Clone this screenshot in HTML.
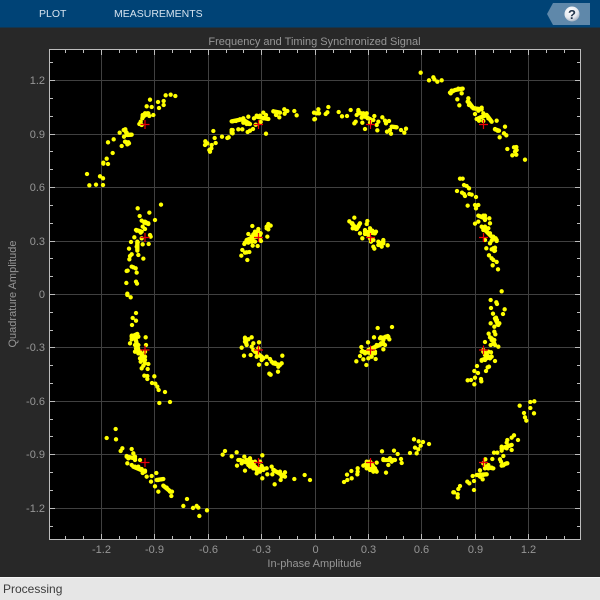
<!DOCTYPE html>
<html><head><meta charset="utf-8"><style>
html,body{margin:0;padding:0;width:600px;height:600px;overflow:hidden;background:#282828;font-family:"Liberation Sans",sans-serif}
svg{position:absolute;left:0;top:0}
</style></head><body>
<svg width="600" height="600" viewBox="0 0 600 600" font-family="'Liberation Sans',sans-serif">
<defs><radialGradient id="b" cx=".4" cy=".3" r=".8"><stop offset="0" stop-color="#fff"/><stop offset=".6" stop-color="#e4e8ee"/><stop offset="1" stop-color="#8d9db0"/></radialGradient></defs>
<rect width="600" height="600" fill="#282828"/>
<rect width="600" height="27.5" fill="#004376"/>
<text x="39" y="17" font-size="10.5" fill="#d4e2ee">PLOT</text>
<text x="114" y="17" font-size="10.5" fill="#d4e2ee">MEASUREMENTS</text>
<path d="M553 3H590V25H553L547 14Z" fill="#5f88aa"/>
<circle cx="572" cy="14" r="7.5" fill="url(#b)"/>
<text x="572" y="19" font-size="13" font-weight="bold" text-anchor="middle" fill="#24374d">?</text>
<text x="314.500" y="45" font-size="11" text-anchor="middle" fill="#969696">Frequency and Timing Synchronized Signal</text>
<rect x="49.500" y="49.500" width="531" height="490" fill="#000"/>
<g stroke="#404040" fill="none" shape-rendering="crispEdges">
<path d="M101.500 50V539M154.500 50V539M208.500 50V539M261.500 50V539M315.500 50V539M368.500 50V539M421.500 50V539M475.500 50V539M528.500 50V539"/>
<path d="M50 80.500H580M50 134.500H580M50 187.500H580M50 241.500H580M50 294.500H580M50 347.500H580M50 401.500H580M50 454.500H580M50 508.500H580"/>
</g>
<g stroke="#bdbdbd" fill="none" shape-rendering="crispEdges">
<path d="M65.500 50v3M83.500 50v3M119.500 50v3M136.500 50v3M172.500 50v3M190.500 50v3M226.500 50v3M243.500 50v3M279.500 50v3M297.500 50v3M333.500 50v3M350.500 50v3M386.500 50v3M403.500 50v3M439.500 50v3M457.500 50v3M493.500 50v3M510.500 50v3M546.500 50v3M564.500 50v3"/>
<path d="M65.500 539v-3M83.500 539v-3M119.500 539v-3M136.500 539v-3M172.500 539v-3M190.500 539v-3M226.500 539v-3M243.500 539v-3M279.500 539v-3M297.500 539v-3M333.500 539v-3M350.500 539v-3M386.500 539v-3M403.500 539v-3M439.500 539v-3M457.500 539v-3M493.500 539v-3M510.500 539v-3M546.500 539v-3M564.500 539v-3"/>
<path d="M101.500 50v5M154.500 50v5M208.500 50v5M261.500 50v5M315.500 50v5M368.500 50v5M421.500 50v5M475.500 50v5M528.500 50v5M101.500 539v-5M154.500 539v-5M208.500 539v-5M261.500 539v-5M315.500 539v-5M368.500 539v-5M421.500 539v-5M475.500 539v-5M528.500 539v-5"/>
<path d="M50 62.500h3M50 98.500h3M50 116.500h3M50 151.500h3M50 169.500h3M50 205.500h3M50 223.500h3M50 258.500h3M50 276.500h3M50 312.500h3M50 330.500h3M50 365.500h3M50 383.500h3M50 419.500h3M50 436.500h3M50 472.500h3M50 490.500h3M50 526.500h3"/>
<path d="M580 62.500h-3M580 98.500h-3M580 116.500h-3M580 151.500h-3M580 169.500h-3M580 205.500h-3M580 223.500h-3M580 258.500h-3M580 276.500h-3M580 312.500h-3M580 330.500h-3M580 365.500h-3M580 383.500h-3M580 419.500h-3M580 436.500h-3M580 472.500h-3M580 490.500h-3M580 526.500h-3"/>
<path d="M50 80.500h5M50 134.500h5M50 187.500h5M50 241.500h5M50 294.500h5M50 347.500h5M50 401.500h5M50 454.500h5M50 508.500h5M580 80.500h-5M580 134.500h-5M580 187.500h-5M580 241.500h-5M580 294.500h-5M580 347.500h-5M580 401.500h-5M580 454.500h-5M580 508.500h-5"/>
<rect x="49.500" y="49.500" width="531" height="490"/>
</g>
<g font-size="11" fill="#969696" text-anchor="end">
<text x="45" y="84">1.2</text><text x="45" y="138">0.9</text><text x="45" y="191">0.6</text><text x="45" y="245">0.3</text><text x="45" y="298">0</text><text x="45" y="351">-0.3</text><text x="45" y="405">-0.6</text><text x="45" y="458">-0.9</text><text x="45" y="512">-1.2</text>
</g>
<g font-size="11" fill="#969696" text-anchor="middle">
<text x="101.500" y="553">-1.2</text><text x="154.500" y="553">-0.9</text><text x="208.500" y="553">-0.6</text><text x="261.500" y="553">-0.3</text><text x="315.500" y="553">0</text><text x="368.500" y="553">0.3</text><text x="421.500" y="553">0.6</text><text x="475.500" y="553">0.9</text><text x="528.500" y="553">1.2</text>
<text x="314.500" y="567">In-phase Amplitude</text>
<text transform="translate(16,294) rotate(-90)">Quadrature Amplitude</text>
</g>
<g fill="none" stroke="#ffff00" stroke-width="13" stroke-linecap="round" stroke-linejoin="round">
<path transform="translate(50,50) scale(.3333)" d="M278 200L295 190M225 240L232 255L245 254M225 275L237 280M580 210L600 222M545 214L575 208M545 240L548 250M620 200L655 207M670 184L690 188M258 540L275 545M262 575L262 600M590 570L630 555M600 575L620 550M655 525L650 535M285 515L295 522M347 136h.1M362 134h.1M376 138h.1M300 149h.1M324 156h.1M341 153h.1M341 165h.1M327 174h.1M305 171h.1M290 169h.1M285 190h.1M278 195h.1M292 190h.1M280 200h.1M310 195h.1M298 198h.1M277 205h.1M272 215h.1M268 222h.1M275 225h.1M226 238h.1M221 240h.1M230 248h.1M240 254h.1M232 255h.1M222 260h.1M209 248h.1M191 268h.1M174 277h.1M225 275h.1M235 277h.1M232 283h.1M215 288h.1M188 309h.1M170 326h.1M160 338h.1M160 341h.1M174 342h.1M111 372h.1M150 379h.1M159 385h.1M118 406h.1M138 404h.1M159 405h.1M490 243h.1M648 251h.1M545 245h.1M548 240h.1M545 248h.1M565 238h.1M577 238h.1M593 246h.1M600 242h.1M609 237h.1M516 260h.1M532 264h.1M536 262h.1M494 264h.1M466 274h.1M472 280h.1M465 285h.1M485 285h.1M497 279h.1M484 295h.1M480 305h.1M478 300h.1M548 214h.1M558 213h.1M570 208h.1M580 205h.1M595 200h.1M585 215h.1M590 222h.1M597 222h.1M580 218h.1M612 205h.1M620 197h.1M630 197h.1M640 188h.1M648 195h.1M640 205h.1M655 207h.1M632 216h.1M617 224h.1M670 184h.1M680 187h.1M688 188h.1M703 178h.1M712 183h.1M733 183h.1M740 196h.1M704 191h.1M688 202h.1M678 195h.1M792 188h.1M793 208h.1M333 464h.1M263 475h.1M298 488h.1M269 498h.1M315 510h.1M275 512h.1M283 518h.1M290 520h.1M295 520h.1M278 530h.1M285 537h.1M260 542h.1M268 543h.1M272 548h.1M300 555h.1M302 560h.1M253 562h.1M275 565h.1M243 576h.1M263 577h.1M262 585h.1M296 582h.1M278 583h.1M237 596h.1M260 590h.1M262 602h.1M245 613h.1M240 618h.1M238 628h.1M265 615h.1M280 626h.1M245 650h.1M250 652h.1M257 655h.1M230 663h.1M233 662h.1M260 668h.1M229 699h.1M258 695h.1M261 701h.1M232 731h.1M607 528h.1M655 522h.1M662 527h.1M650 530h.1M655 538h.1M652 560h.1M625 537h.1M615 545h.1M625 545h.1M632 550h.1M595 552h.1M610 553h.1M605 560h.1M620 560h.1M630 565h.1M600 568h.1M590 570h.1M585 578h.1M595 578h.1M605 575h.1M615 575h.1M633 573h.1M583 582h.1M608 587h.1M623 588h.1M577 600h.1M585 608h.1M590 607h.1M598 606h.1M574 617h.1M592 630h.1"/>
<path transform="translate(315,50) scale(.3333)" d="M460 155L475 175L500 178M405 128L420 120L443 116M490 205L515 195L530 215M540 238L552 242M500 530L530 560L545 570M490 497L510 505M535 595L540 602M130 185L160 205M230 230L245 232M150 545L180 550M190 585L205 575M110 520L125 537L135 520M317 68h.1M342 91h.1M355 82h.1M358 88h.1M367 95h.1M380 91h.1M407 130h.1M410 122h.1M420 120h.1M430 116h.1M443 116h.1M440 130h.1M427 148h.1M433 166h.1M460 145h.1M458 155h.1M462 165h.1M470 170h.1M480 175h.1M500 173h.1M490 182h.1M480 192h.1M505 190h.1M485 207h.1M497 202h.1M492 212h.1M515 195h.1M520 205h.1M505 213h.1M530 215h.1M545 212h.1M570 230h.1M540 237h.1M548 242h.1M567 250h.1M574 256h.1M554 262h.1M577 297h.1M597 292h.1M604 291h.1M605 300h.1M600 305h.1M592 316h.1M604 314h.1M630 329h.1M40 171h.1M10 178h.1M12 190h.1M5 190h.1M37 187h.1M32 192h.1M0 207h.1M71 186h.1M81 199h.1M96 198h.1M107 180h.1M130 180h.1M125 195h.1M135 190h.1M145 190h.1M155 190h.1M140 203h.1M150 200h.1M158 205h.1M165 207h.1M178 198h.1M175 210h.1M122 215h.1M118 220h.1M142 218h.1M150 237h.1M165 218h.1M190 215h.1M185 225h.1M187 241h.1M202 202h.1M210 212h.1M222 213h.1M213 220h.1M230 230h.1M243 232h.1M225 240h.1M216 245h.1M228 251h.1M258 240h.1M268 248h.1M273 236h.1M435 386h.1M443 386h.1M447 405h.1M455 408h.1M462 415h.1M426 423h.1M441 428h.1M447 432h.1M450 438h.1M463 432h.1M470 434h.1M483 441h.1M480 465h.1M490 465h.1M458 467h.1M483 475h.1M490 497h.1M505 497h.1M510 497h.1M523 505h.1M510 510h.1M490 515h.1M480 521h.1M525 520h.1M510 530h.1M505 540h.1M520 535h.1M515 545h.1M525 550h.1M535 560h.1M542 565h.1M510 570h.1M530 572h.1M545 573h.1M525 580h.1M514 595h.1M530 598h.1M540 593h.1M538 603h.1M522 616h.1M530 625h.1M535 630h.1M545 636h.1M533 646h.1M549 658h.1M560 724h.1M118 503h.1M103 514h.1M157 513h.1M112 520h.1M135 520h.1M155 522h.1M130 530h.1M113 535h.1M123 537h.1M135 550h.1M150 540h.1M165 535h.1M172 542h.1M183 545h.1M150 552h.1M160 555h.1M142 565h.1M165 565h.1M175 570h.1M190 575h.1M205 570h.1M168 575h.1M175 590h.1M178 596h.1M190 585h.1M200 590h.1M205 580h.1M218 586h.1"/>
<path transform="translate(50,295) scale(.3333)" d="M255 125L265 165M270 170L285 195M245 125L262 117M610 165L640 190M585 130L590 150M670 205L690 210M230 485L255 490M250 515L285 530M320 555L340 552M340 572L362 590M570 495L610 510M620 525L640 520M670 525L705 545M600 500L630 530M232 0h.1M242 7h.1M258 54h.1M248 69h.1M258 77h.1M246 90h.1M262 117h.1M245 122h.1M265 125h.1M245 133h.1M240 145h.1M287 127h.1M288 150h.1M255 150h.1M265 150h.1M258 160h.1M255 170h.1M265 175h.1M285 170h.1M275 180h.1M285 185h.1M270 190h.1M280 195h.1M272 200h.1M285 205h.1M295 207h.1M280 212h.1M275 220h.1M293 222h.1M283 242h.1M292 243h.1M292 252h.1M313 244h.1M306 264h.1M316 266h.1M322 275h.1M326 285h.1M345 291h.1M360 321h.1M328 324h.1M585 128h.1M605 127h.1M595 133h.1M585 140h.1M575 158h.1M590 150h.1M610 145h.1M627 142h.1M605 155h.1M625 160h.1M615 170h.1M582 182h.1M602 180h.1M620 185h.1M635 185h.1M650 185h.1M660 192h.1M635 195h.1M665 200h.1M650 207h.1M627 209h.1M675 203h.1M695 205h.1M685 215h.1M697 182h.1M684 230h.1M658 236h.1M662 239h.1M197 402h.1M170 429h.1M198 433h.1M217 460h.1M212 468h.1M245 462h.1M250 475h.1M255 485h.1M230 483h.1M255 495h.1M235 490h.1M232 505h.1M270 495h.1M245 510h.1M255 515h.1M265 515h.1M275 522h.1M285 527h.1M278 534h.1M290 545h.1M305 543h.1M319 534h.1M303 560h.1M325 555h.1M335 553h.1M315 574h.1M325 590h.1M340 572h.1M350 578h.1M360 590h.1M366 590h.1M364 603h.1M411 612h.1M400 633h.1M429 639h.1M440 633h.1M445 638h.1M471 646h.1M448 663h.1M525 468h.1M518 479h.1M560 472h.1M545 484h.1M583 485h.1M565 495h.1M575 505h.1M561 512h.1M590 495h.1M600 490h.1M605 500h.1M595 510h.1M600 515h.1M615 500h.1M630 500h.1M637 481h.1M610 520h.1M585 527h.1M625 525h.1M635 513h.1M620 535h.1M640 525h.1M650 520h.1M637 550h.1M652 538h.1M665 515h.1M667 538h.1M672 525h.1M690 530h.1M705 532h.1M695 545h.1M705 545h.1M692 555h.1M733 552h.1M764 540h.1M780 555h.1M674 568h.1"/>
<path transform="translate(315,295) scale(.3333)" d="M140 170L180 175M160 165L205 145M195 130L220 125M530 130L540 150M540 70L550 90M505 170L525 190M500 195L515 190M560 460L590 450M510 515L535 520M485 540L515 538M205 495L240 495M150 510L180 520M165 500L185 530M560 512L575 505M188 99h.1M231 96h.1M177 127h.1M197 127h.1M212 125h.1M218 123h.1M223 133h.1M159 142h.1M205 135h.1M198 145h.1M210 150h.1M185 150h.1M205 163h.1M139 156h.1M142 168h.1M160 165h.1M175 160h.1M150 175h.1M165 175h.1M180 170h.1M135 183h.1M145 193h.1M160 190h.1M170 185h.1M182 192h.1M124 199h.1M154 210h.1M527 15h.1M544 22h.1M546 27h.1M528 39h.1M569 43h.1M534 56h.1M564 57h.1M543 68h.1M546 75h.1M527 85h.1M548 88h.1M538 95h.1M553 85h.1M521 116h.1M538 110h.1M541 118h.1M525 127h.1M530 135h.1M538 135h.1M510 141h.1M527 150h.1M538 148h.1M550 155h.1M505 165h.1M520 170h.1M528 172h.1M510 180h.1M530 185h.1M500 197h.1M510 195h.1M540 198h.1M522 215h.1M518 217h.1M486 213h.1M513 228h.1M478 228h.1M489 234h.1M480 248h.1M458 256h.1M468 255h.1M498 252h.1M499 259h.1M478 268h.1M614 332h.1M646 321h.1M658 319h.1M646 339h.1M627 354h.1M630 367h.1M634 377h.1M657 355h.1M597 421h.1M590 428h.1M609 435h.1M577 435h.1M575 443h.1M560 455h.1M585 452h.1M575 460h.1M590 465h.1M560 467h.1M537 473h.1M547 473h.1M532 492h.1M565 483h.1M555 493h.1M558 500h.1M577 505h.1M560 512h.1M565 511h.1M511 493h.1M505 505h.1M520 510h.1M530 518h.1M510 520h.1M520 520h.1M495 526h.1M473 543h.1M485 540h.1M495 545h.1M505 540h.1M515 538h.1M503 553h.1M457 560h.1M463 565h.1M477 558h.1M477 585h.1M435 573h.1M430 582h.1M415 592h.1M417 592h.1M428 598h.1M428 607h.1M297 433h.1M311 439h.1M324 441h.1M342 447h.1M317 452h.1M300 458h.1M310 463h.1M285 474h.1M305 475h.1M237 467h.1M248 477h.1M201 469h.1M258 492h.1M260 504h.1M205 492h.1M215 495h.1M225 490h.1M230 500h.1M240 495h.1M220 510h.1M213 533h.1M185 503h.1M155 500h.1M165 505h.1M145 512h.1M155 520h.1M165 525h.1M175 530h.1M185 530h.1M128 520h.1M128 530h.1M127 538h.1M109 528h.1M96 539h.1M110 550h.1M87 561h.1M97 555h.1"/>
</g>
<path fill="none" stroke="#e8000a" stroke-width="1.200" d="M140.500 124.500h9M145 120v9M254 124.500h9M258.500 120v9M366 124.500h9M370.500 120v9M479 124.500h9M483.500 120v9M140.500 237.500h9M145 233v9M254 237.500h9M258.500 233v9M366 237.500h9M370.500 233v9M479 237.500h9M483.500 233v9M140.500 350h9M145 345.500v9M254 350h9M258.500 345.500v9M366 350h9M370.500 345.500v9M479 350h9M483.500 345.500v9M140.500 462.500h9M145 458v9M254 462.500h9M258.500 458v9M366 462.500h9M370.500 458v9M479 462.500h9M483.500 458v9"/>
<rect y="577" width="600" height="23" fill="#e6e6e6"/>
<rect y="577" width="600" height="1" fill="#f4f4f4"/>
<text x="3" y="593" font-size="12" fill="#3c3c3c">Processing</text>
</svg>
</body></html>
